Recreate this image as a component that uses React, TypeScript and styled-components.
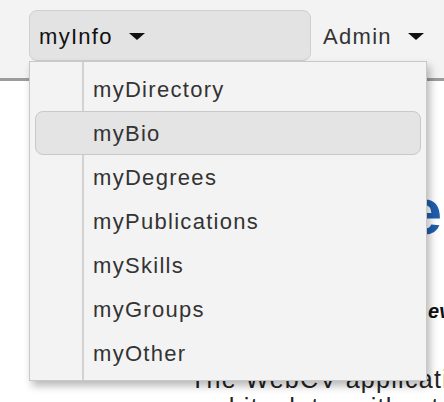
import styled, { createGlobalStyle } from "styled-components";

const GlobalStyle = createGlobalStyle`
  html, body {
    margin: 0;
    padding: 0;
    background: #fff;
    overflow: hidden;
  }
  body {
    font-family: "Liberation Sans", Arial, sans-serif;
  }
`;

const Page = styled.div`
  width: 444px;
  height: 402px;
  overflow: hidden;
  position: relative;
`;

const Header = styled.header`
  height: 81px;
  box-sizing: border-box;
  background: #f3f3f3;
  border-bottom: 3px solid #9c9c9c;
`;

const Nav = styled.nav`
  display: flex;
  align-items: center;
  padding: 10px 0 0 29px;
`;

const NavItem = styled.div`
  position: relative;
`;

const NavButton = styled.button<{ $open?: boolean }>`
  display: flex;
  align-items: center;
  gap: 16px;
  box-sizing: border-box;
  height: 51px;
  width: ${(p) => (p.$open ? "282px" : "auto")};
  margin-right: ${(p) => (p.$open ? "11px" : "0")};
  padding: 2px ${(p) => (p.$open ? "9px" : "0")} 0;
  border: 1px solid ${(p) => (p.$open ? "#cfcfcf" : "transparent")};
  border-radius: 8px;
  background: ${(p) => (p.$open ? "#e3e3e3" : "transparent")};
  color: ${(p) => (p.$open ? "#111" : "#333")};
  font-family: "Liberation Sans", Arial, sans-serif;
  font-size: 22px;
  letter-spacing: 1.3px;
  cursor: pointer;
`;

const Caret = styled.span`
  width: 0;
  height: 0;
  border-left: 8px solid transparent;
  border-right: 8px solid transparent;
  border-top: 7px solid #111;
`;

const Menu = styled.ul`
  position: absolute;
  top: 51px;
  left: 0;
  z-index: 5;
  width: 398px;
  height: 320px;
  box-sizing: border-box;
  margin: 0;
  padding: 5px 5px;
  list-style: none;
  background: #f3f3f3;
  border: 1px solid #c8c8c8;
  box-shadow: 3px 5px 8px rgba(0, 0, 0, 0.28);

  &::before {
    content: "";
    position: absolute;
    top: 0;
    bottom: 0;
    left: 52px;
    width: 2px;
    background: #d2d2d2;
  }
`;

const MenuItem = styled.li<{ $active?: boolean }>`
  position: relative;
  display: flex;
  align-items: center;
  height: 44px;
  box-sizing: border-box;
  padding: 2px 0 0 57px;
  border: 1px solid ${(p) => (p.$active ? "#c8c8c8" : "transparent")};
  border-radius: 8px;
  background: ${(p) => (p.$active ? "#e4e4e4" : "transparent")};
  color: #333;
  font-size: 22px;
  letter-spacing: 1.3px;
`;

const Content = styled.main`
  white-space: nowrap;
`;

const Title = styled.h1`
  margin: 0;
  padding: 94px 2px 0 0;
  text-align: right;
  font-size: 64px;
  line-height: 74px;
  font-weight: bold;
  color: #1f5fae;
`;

const Tagline = styled.p`
  margin: 0;
  padding: 50px 0 0 428px;
  font-size: 20px;
  line-height: 24px;
  font-weight: bold;
  font-style: italic;
  color: #111;
`;

const Intro = styled.p`
  margin: 0;
  padding: 42px 0 0 190px;
  font-size: 25px;
  line-height: 28px;
  letter-spacing: 1.3px;
  color: #222;
`;

const items = [
  "myDirectory",
  "myBio",
  "myDegrees",
  "myPublications",
  "mySkills",
  "myGroups",
  "myOther",
];

export default function App() {
  return (
    <Page>
      <GlobalStyle />
      <Header>
        <Nav>
          <NavItem>
            <NavButton $open>
              myInfo <Caret />
            </NavButton>
            <Menu>
              {items.map((item) => (
                <MenuItem key={item} $active={item === "myBio"}>
                  {item}
                </MenuItem>
              ))}
            </Menu>
          </NavItem>
          <NavItem>
            <NavButton>
              Admin <Caret />
            </NavButton>
          </NavItem>
        </Nav>
      </Header>
      <Content>
        <Title>Home</Title>
        <Tagline>everything about you</Tagline>
        <Intro>
          The WebCV application
          <br />
          and its data, without the
        </Intro>
      </Content>
    </Page>
  );
}
